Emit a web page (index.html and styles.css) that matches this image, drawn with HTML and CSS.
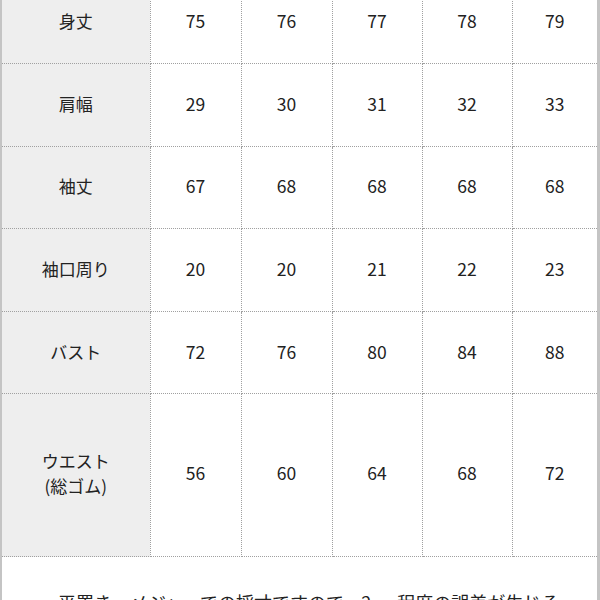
FILE: index.html
```html
<!DOCTYPE html>
<html lang="ja">
<head>
<meta charset="utf-8">
<link rel="stylesheet" href="styles.css">
</head>
<body>
<div class="frame">
  <table class="size">
    <colgroup>
      <col class="c-label"><col class="c1"><col class="c2"><col class="c3"><col class="c4"><col class="c5">
    </colgroup>
    <tbody>
      <tr><th>身丈</th><td>75</td><td>76</td><td>77</td><td>78</td><td>79</td></tr>
      <tr><th>肩幅</th><td>29</td><td>30</td><td>31</td><td>32</td><td>33</td></tr>
      <tr><th>袖丈</th><td>67</td><td>68</td><td>68</td><td>68</td><td>68</td></tr>
      <tr><th>袖口周り</th><td>20</td><td>20</td><td>21</td><td>22</td><td>23</td></tr>
      <tr><th>バスト</th><td>72</td><td>76</td><td>80</td><td>84</td><td>88</td></tr>
      <tr class="tall"><th>ウエスト<br>(総ゴム)</th><td>56</td><td>60</td><td>64</td><td>68</td><td>72</td></tr>
    </tbody>
  </table>
  <p class="note">平置き・メジャーでの採寸ですので、2cm程度の誤差が生じる</p>
</div>
</body>
</html>
```

FILE: styles.css
```css
html, body {
  margin: 0;
  padding: 0;
  background: #ffffff;
}
body {
  font-family: "Noto Sans CJK JP", "Noto Sans", sans-serif;
  color: #222222;
  width: 600px;
  height: 600px;
  overflow: hidden;
}
.frame {
  box-sizing: border-box;
  width: 600px;
  height: 600px;
  border-left: 2px solid #c4c4c4;
  border-right: 3px solid #c4c4c4;
  overflow: hidden;
}
.size {
  width: 595px;
  table-layout: fixed;
  border-collapse: collapse;
  margin-top: -19px;
}
.c-label { width: 148px; }
.c1 { width: 91px; }
.c2 { width: 91px; }
.c3 { width: 90px; }
.c4 { width: 90px; }
.c5 { width: 85px; }
.size th, .size td {
  box-sizing: border-box;
  height: 82.6px;
  padding: 0 0 3px 0;
  text-align: center;
  vertical-align: middle;
  font-size: 17px;
  font-weight: normal;
  line-height: 25px;
  border-bottom: 1px dotted #a0a0a0;
  border-right: 1px dotted #a0a0a0;
}
.size td:last-child { border-right: none; }
.size th {
  background: #eeeeee;
  color: #222222;
}
.size td {
  font-size: 17.5px;
}
.size tr.tall th, .size tr.tall td {
  height: 162.6px;
  padding-bottom: 5px;
}
.note {
  margin: 0;
  padding: 32px 0 0 56px;
  font-size: 18px;
  line-height: 26px;
  white-space: nowrap;
  color: #222222;
}
```
